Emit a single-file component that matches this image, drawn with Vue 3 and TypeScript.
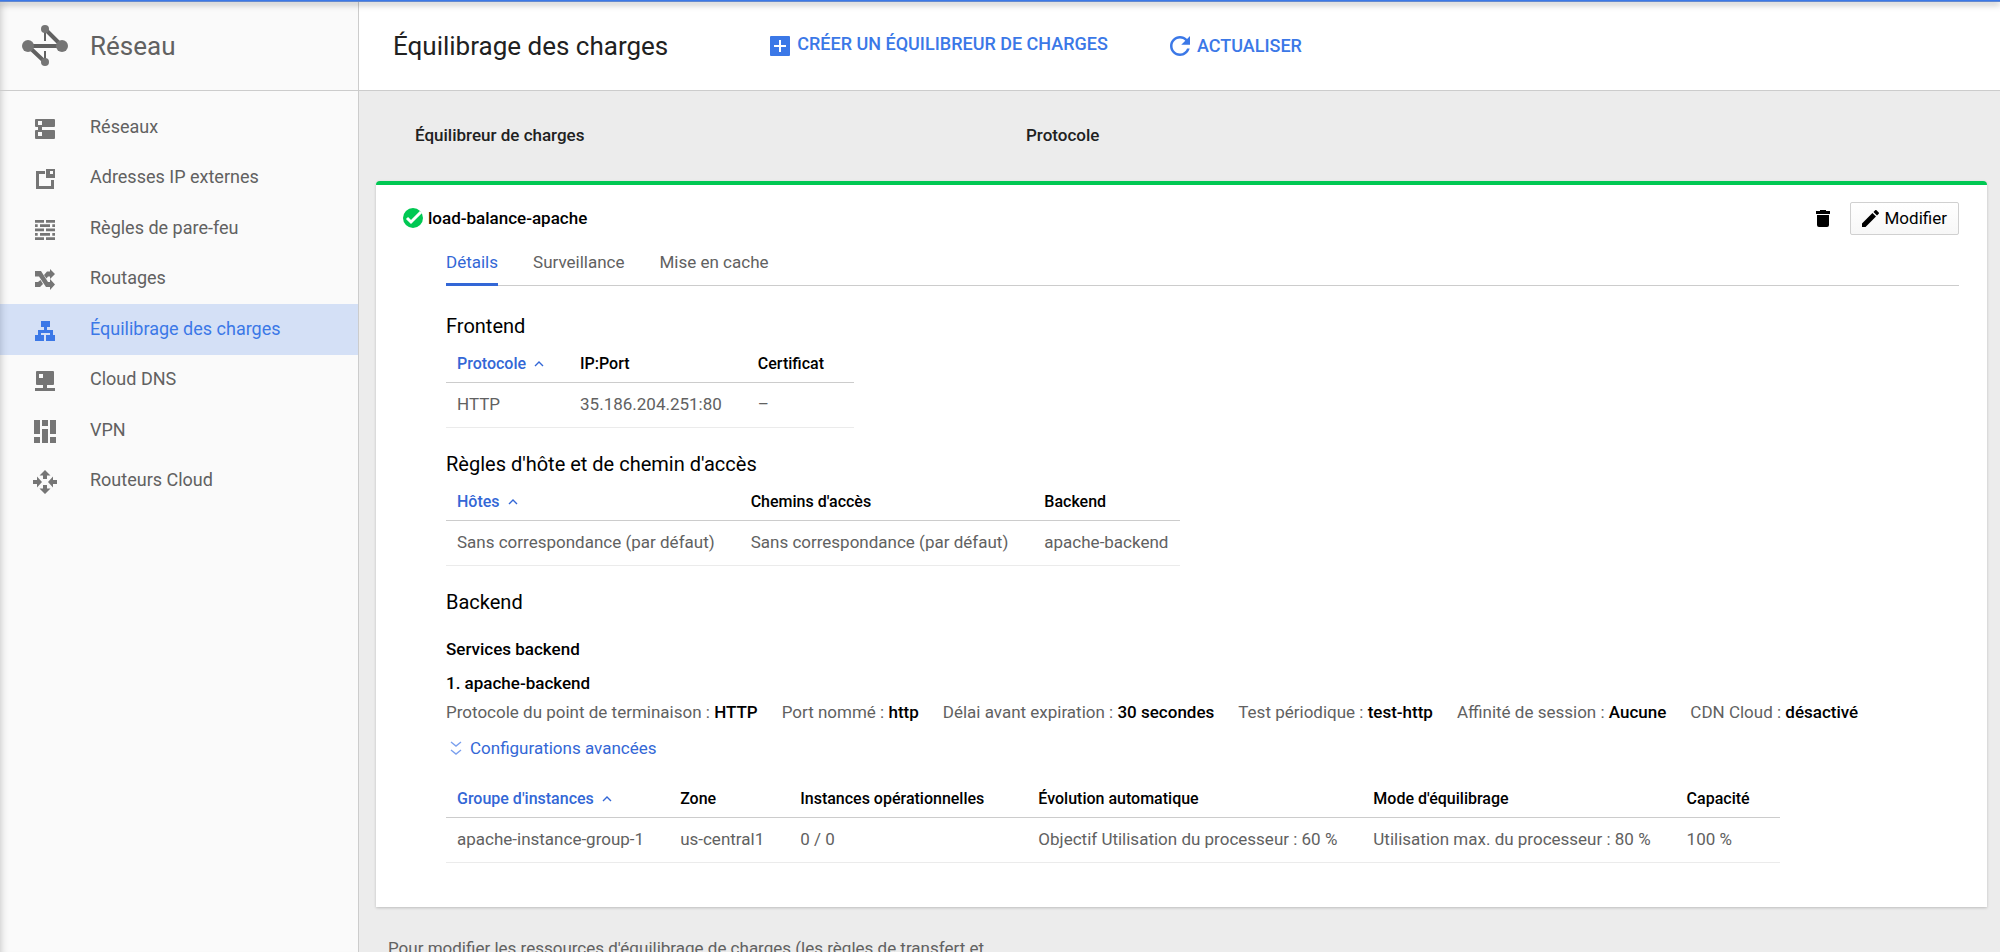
<script setup lang="ts">
import { ref } from 'vue'

interface Shape {
  d: string
  evenodd?: boolean
}
interface NavItem {
  label: string
  shape: Shape
}
interface Grid {
  head: string[]
  rows: string[][]
}

const navItems: NavItem[] = [
  {
    label: 'Réseaux',
    shape: {
      d: 'M3 2h18a1 1 0 0 1 1 1v6a1 1 0 0 1-1 1H9v3h12a1 1 0 0 1 1 1v7a1 1 0 0 1-1 1H3a1 1 0 0 1-1-1v-7a1 1 0 0 1 1-1h2v-3H3a1 1 0 0 1-1-1V3a1 1 0 0 1 1-1zM5 4v4h4V4zM5 15v4h4v-4z',
      evenodd: true,
    },
  },
  {
    label: 'Adresses IP externes',
    shape: {
      d: 'M3 4h9v3H6v12h12v-6h3v9H3zM13 2h9v9h-9zM17 4v3h3V4z',
      evenodd: true,
    },
  },
  {
    label: 'Règles de pare-feu',
    shape: {
      d: 'M2 2h9v2.7H2zM13 2h9v2.7h-9zM2 6.3h2.7V9H2zM7 6.3h10V9H7zM19.3 6.3H22V9h-2.7zM2 10.6h9v2.7H2zM13 10.6h9v2.7h-9zM2 15h2.7v2.7H2zM7 15h10v2.7H7zM19.3 15H22v2.7h-2.7zM2 19.3h9V22H2zM13 19.3h9V22h-9z',
    },
  },
  {
    label: 'Routages',
    shape: {
      d: 'M2 3h6l7 11h2v-3l5 5.5-5 5.5v-3h-4L6 8.5H2zM2 14h3l2.5-2 2.5 4-3 3H2zM11 7l3-3.5h3V1l5 5-5 5V8.5h-2l-1.5 2z',
    },
  },
  {
    label: 'Équilibrage des charges',
    shape: {
      d: 'M8 2h9v6h-3v3h6v5h2v6h-9v-6h4v-2H8v2h3v6H2v-6h3v-5h6V8H8z',
    },
  },
  {
    label: 'Cloud DNS',
    shape: {
      d: 'M4 2h16a1 1 0 0 1 1 1v12a1 1 0 0 1-1 1h-6v3h8v3H2v-3h8v-3H4a1 1 0 0 1-1-1V3a1 1 0 0 1 1-1zM6 5v4h4V5z',
      evenodd: true,
    },
  },
  {
    label: 'VPN',
    shape: {
      d: 'M1 0h6v14H1zM1 17h6v6H1zM9 0h6v6H9zM9 9h6v14H9zM17 0h6v14h-6zM17 17h6v6h-6z',
    },
  },
  {
    label: 'Routeurs Cloud',
    shape: {
      d: 'M12 0l5.5 5.5H14V9h-4V5.5H6.500zM12 24l-5.500-5.500H10V15h4v3.500h3.500zM0 10h4V6.500L9 12l-5 5.500V14H0zM24 10h-4V6.500L15 12l5 5.500V14h4z',
    },
  },
]
const activeNav = ref('Équilibrage des charges')

const tabs = ['Détails', 'Surveillance', 'Mise en cache']
const activeTab = ref('Détails')

const frontend: Grid = {
  head: ['Protocole', 'IP:Port', 'Certificat'],
  rows: [['HTTP', '35.186.204.251:80', '–']],
}
const rules: Grid = {
  head: ['Hôtes', "Chemins d'accès", 'Backend'],
  rows: [['Sans correspondance (par défaut)', 'Sans correspondance (par défaut)', 'apache-backend']],
}
const groups: Grid = {
  head: [
    "Groupe d'instances",
    'Zone',
    'Instances opérationnelles',
    'Évolution automatique',
    "Mode d'équilibrage",
    'Capacité',
  ],
  rows: [
    [
      'apache-instance-group-1',
      'us-central1',
      '0 / 0',
      'Objectif Utilisation du processeur : 60 %',
      'Utilisation max. du processeur : 80 %',
      '100 %',
    ],
  ],
}
const sections = [
  { title: 'Frontend', grid: frontend },
  { title: "Règles d'hôte et de chemin d'accès", grid: rules },
]
const properties = [
  ['Protocole du point de terminaison', 'HTTP'],
  ['Port nommé', 'http'],
  ['Délai avant expiration', '30 secondes'],
  ['Test périodique', 'test-http'],
  ['Affinité de session', 'Aucune'],
  ['CDN Cloud', 'désactivé'],
]
</script>

<template>
  <div class="page">
    <aside class="sidebar">
      <div class="product">
        <svg class="product-icon" viewBox="0 0 46 44" aria-hidden="true">
          <path d="M6 22H40M23 5L40 22M6 22L23 38" stroke="#616161" stroke-width="4" fill="none" />
          <path d="M23 5V17M23 27V38" stroke="#616161" stroke-width="2" fill="none" />
          <circle cx="6" cy="22" r="6" />
          <circle cx="40" cy="22" r="6" />
          <circle cx="23" cy="5" r="4" />
          <circle cx="23" cy="38" r="4" />
        </svg>
        <span class="product-name">Réseau</span>
      </div>
      <nav class="nav">
        <a
          v-for="item in navItems"
          :key="item.label"
          href="#"
          class="nav-item"
          :class="{ active: item.label === activeNav }"
          @click.prevent="activeNav = item.label"
        >
          <svg class="nav-icon" viewBox="0 0 24 24" aria-hidden="true">
            <path :d="item.shape.d" :fill-rule="item.shape.evenodd ? 'evenodd' : 'nonzero'" />
          </svg>
          <span>{{ item.label }}</span>
        </a>
      </nav>
    </aside>

    <div class="content">
      <header class="topbar">
        <h1>Équilibrage des charges</h1>
        <button type="button" class="action create">
          <svg viewBox="0 0 20 20" aria-hidden="true">
            <path fill-rule="evenodd" d="M1 0h18a1 1 0 0 1 1 1v18a1 1 0 0 1-1 1H1a1 1 0 0 1-1-1V1a1 1 0 0 1 1-1zM9 4v5H4v2h5v5h2v-5h5V9h-5V4z" />
          </svg>
          <span>CRÉER UN ÉQUILIBREUR DE CHARGES</span>
        </button>
        <button type="button" class="action">
          <svg viewBox="4 4 16 16" aria-hidden="true">
            <path d="M17.65 6.35C16.2 4.9 14.21 4 12 4c-4.42 0-7.99 3.58-7.99 8s3.57 8 7.99 8c3.73 0 6.84-2.55 7.73-6h-2.08c-.82 2.33-3.04 4-5.65 4-3.31 0-6-2.69-6-6s2.69-6 6-6c1.66 0 3.14.69 4.22 1.78L13 11h7V4l-2.35 2.35z" />
          </svg>
          <span>ACTUALISER</span>
        </button>
      </header>

      <main class="main">
        <div class="list-head">
          <span>Équilibreur de charges</span>
          <span>Protocole</span>
        </div>

        <section class="card">
          <div class="card-head">
            <svg class="status" viewBox="0 0 20 20" aria-hidden="true">
              <circle cx="10" cy="10" r="10" fill="#00c853" />
              <path d="M4 10l4 4L18 4" stroke="#fff" stroke-width="3" fill="none" />
            </svg>
            <h2>load-balance-apache</h2>
            <button type="button" class="delete" aria-label="Supprimer">
              <svg viewBox="0 0 14 17" aria-hidden="true">
                <path d="M4 0h6v1h4v3H0V1h4zM1 5h12v10a2 2 0 0 1-2 2H3a2 2 0 0 1-2-2z" />
              </svg>
            </button>
            <button type="button" class="edit">
              <svg viewBox="3 3 18 18" aria-hidden="true">
                <path d="M3 17.25V21h3.75L17.81 9.94l-3.75-3.75L3 17.25zM20.71 7.04c.39-.39.39-1.02 0-1.41l-2.34-2.34c-.39-.39-1.02-.39-1.41 0l-1.83 1.83 3.75 3.75 1.83-1.83z" />
              </svg>
              <span>Modifier</span>
            </button>
          </div>

          <div class="card-body">
            <div class="tabs" role="tablist">
              <button
                v-for="tab in tabs"
                :key="tab"
                type="button"
                role="tab"
                class="tab"
                :class="{ active: tab === activeTab }"
                :aria-selected="tab === activeTab"
                @click="activeTab = tab"
              >
                {{ tab }}
              </button>
            </div>

            <template v-for="section in sections" :key="section.title">
              <h3>{{ section.title }}</h3>
              <table>
                <thead>
                  <tr>
                    <th v-for="(label, i) in section.grid.head" :key="label" :class="{ sorted: i === 0 }">
                      {{ label }}<svg class="arrow" viewBox="0 0 10 6" aria-hidden="true"><path d="M1 5l4-4 4 4" /></svg>
                    </th>
                  </tr>
                </thead>
                <tbody>
                  <tr v-for="row in section.grid.rows" :key="row[0]">
                    <td v-for="(cell, i) in row" :key="i">{{ cell }}</td>
                  </tr>
                </tbody>
              </table>
            </template>

            <h3>Backend</h3>
            <h4 class="services">Services backend</h4>
            <h4 class="service">1. apache-backend</h4>
            <div class="properties">
              <span v-for="[name, value] in properties" :key="name">{{ name }} : <b>{{ value }}</b></span>
            </div>
            <button type="button" class="advanced">
              <svg viewBox="0 0 12 16" aria-hidden="true"><path d="M1 2l5 4 5-4M1 10l5 4 5-4" /></svg>
              <span>Configurations avancées</span>
            </button>
            <table>
              <thead>
                <tr>
                  <th v-for="(label, i) in groups.head" :key="label" :class="{ sorted: i === 0 }">
                    {{ label }}<svg class="arrow" viewBox="0 0 10 6" aria-hidden="true"><path d="M1 5l4-4 4 4" /></svg>
                  </th>
                </tr>
              </thead>
              <tbody>
                <tr v-for="row in groups.rows" :key="row[0]">
                  <td v-for="(cell, i) in row" :key="i">{{ cell }}</td>
                </tr>
              </tbody>
            </table>
          </div>
        </section>

        <p class="note">Pour modifier les ressources d'équilibrage de charges (les règles de transfert et</p>
      </main>
    </div>
  </div>
</template>

<style>
body {
  overflow: hidden;
}
</style>

<style scoped>
.page {
  position: relative;
  display: flex;
  height: 100vh;
  overflow: hidden;
  box-sizing: border-box;
  font-family: Roboto, 'Liberation Sans', sans-serif;
  font-size: 17px;
  line-height: 24px;
  color: #616161;
  background: #ececec;
}
.page::before {
  content: '';
  position: absolute;
  z-index: 2;
  top: 0;
  left: 0;
  right: 0;
  height: 1px;
  background: #3b78e7;
  border-bottom: 1px solid #6288cf;
  box-shadow: 0 2px 6px rgba(0, 0, 0, 0.5);
}
button {
  font: inherit;
  color: inherit;
  background: none;
  border: 0;
  padding: 0;
  margin: 0;
  cursor: pointer;
  display: flex;
  align-items: center;
}
h1, h2, h3, h4, p {
  margin: 0;
  font-weight: 400;
}
.sidebar {
  flex: 0 0 358px;
  background: #fafafa;
  border-right: 1px solid #ccc;
  box-shadow: inset 8px 0 8px -8px rgba(0, 0, 0, 0.25);
}
.product {
  display: flex;
  align-items: center;
  box-sizing: border-box;
  height: 91px;
  padding: 2px 22px 0;
  border-bottom: 1px solid #ccc;
}
.product-icon {
  width: 46px;
  height: 44px;
  margin-right: 22px;
  fill: #757575;
}
.product-name {
  font-size: 26px;
  line-height: 32px;
  color: #616161;
}
.nav {
  display: grid;
  grid-template-rows: repeat(8, 1fr);
  height: 404px;
  margin-top: 11px;
}
.nav-item {
  display: flex;
  align-items: center;
  gap: 33px;
  padding-left: 33px;
  padding-bottom: 1px;
  font-size: 18px;
  color: #616161;
  text-decoration: none;
}
.nav-icon {
  width: 24px;
  height: 24px;
  margin-top: 4px;
  fill: #757575;
}
.nav-item.active {
  color: #3b78e7;
  background: rgba(59, 120, 231, 0.2);
}
.nav-item.active .nav-icon {
  fill: #3b78e7;
}
.content {
  flex: 1;
  min-width: 0;
}
.topbar {
  display: flex;
  align-items: center;
  box-sizing: border-box;
  height: 91px;
  padding: 2px 34px 0;
  background: #fff;
  border-bottom: 1px solid #ccc;
}
.topbar h1 {
  font-size: 26px;
  line-height: 32px;
  color: #212121;
  margin-right: 102px;
}
.action {
  gap: 7px;
  margin-right: 62px;
  font-size: 18px;
  font-weight: 500;
  color: #3b78e7;
}
.action svg {
  width: 20px;
  height: 20px;
  fill: #3b78e7;
}
.create span {
  margin-bottom: 4px;
}
.main {
  padding: 0 13px 0 17px;
}
.list-head {
  display: grid;
  grid-template-columns: 611px 1fr;
  padding: 32px 39px 34px;
  color: #212121;
  font-weight: 500;
}
.card {
  background: #fff;
  border-top: 4px solid #00c853;
  border-radius: 4px 4px 0 0;
  box-shadow: 0 1px 3px rgba(0, 0, 0, 0.2);
  padding: 17px 28px 44px 27px;
  color: #000;
}
.card-head {
  display: flex;
  align-items: center;
}
.status {
  width: 20px;
  height: 20px;
  margin-right: 5px;
  margin-bottom: 2px;
}
.card-head h2 {
  flex: 1;
  padding-bottom: 2px;
  font-size: 17px;
  font-weight: 500;
}
.delete {
  margin-right: 20px;
}
.delete svg {
  width: 14px;
  height: 17px;
}
.edit {
  box-sizing: border-box;
  height: 33px;
  gap: 6px;
  padding: 0 11px 1px;
  border: 1px solid #d0d0d0;
  border-radius: 2px;
  background: linear-gradient(#fff, #f7f7f7);
}
.edit svg {
  width: 17px;
  height: 17px;
}
.card-body {
  padding-left: 43px;
}
.tabs {
  display: flex;
  gap: 35px;
  border-bottom: 1px solid #ccc;
  margin-bottom: 28px;
  color: #616161;
}
.tab {
  height: 51px;
  box-sizing: border-box;
  padding-top: 6px;
  border-bottom: 3px solid transparent;
  margin-bottom: -1px;
}
.tab.active {
  color: #3367d6;
  border-bottom-color: #3367d6;
}
h3 {
  font-size: 20px;
}
table {
  border-collapse: separate;
  border-spacing: 0;
  white-space: nowrap;
}
table + h3 {
  margin-top: 24px;
}
th {
  height: 36px;
  padding: 8px 25px 0 11px;
  border-bottom: 1px solid #ccc;
  font-size: 16px;
  font-weight: 500;
  text-align: left;
}
th:last-child,
td:last-child {
  padding-right: 12px;
}
td {
  height: 42px;
  padding: 0 25px 2px 11px;
  border-bottom: 1px solid #ebebeb;
  color: #616161;
}
.arrow {
  width: 10px;
  height: 6px;
  margin-left: 8px;
  vertical-align: 2px;
  fill: none;
  visibility: hidden;
}
.sorted {
  color: #3367d6;
}
.sorted .arrow {
  visibility: visible;
  stroke: #3367d6;
  stroke-width: 1.4;
}
h4 {
  font-weight: 500;
}
.services {
  margin-top: 23px;
}
.service {
  margin-top: 10px;
}
.properties {
  display: flex;
  flex-wrap: wrap;
  column-gap: 24px;
  margin-top: 5px;
  color: #616161;
}
.properties b {
  font-weight: 500;
  color: #000;
}
.advanced {
  gap: 8px;
  margin: 12px 0 13px;
  padding-left: 4px;
  color: #3367d6;
}
.advanced svg {
  width: 12px;
  height: 16px;
  fill: none;
  stroke: #7ba0ee;
  stroke-width: 1.4;
}
.note {
  padding: 29px 12px 0;
}
</style>
